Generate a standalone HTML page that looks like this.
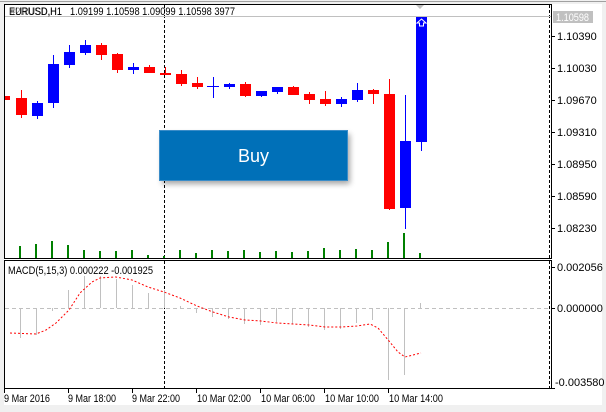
<!DOCTYPE html>
<html><head><meta charset="utf-8"><style>
html,body{margin:0;padding:0;background:#f0f0f0;}
svg{display:block;font-family:"Liberation Sans",sans-serif;}
</style></head><body>
<svg width="606" height="412" viewBox="0 0 606 412" xmlns="http://www.w3.org/2000/svg">
<rect x="0" y="0" width="606" height="412" fill="#f0f0f0"/>
<rect x="4" y="4" width="598" height="401" fill="#fff"/>
<line x1="0" y1="1.5" x2="606" y2="1.5" stroke="#a0a0a0"/>
<rect x="4.5" y="4.5" width="547" height="254" fill="none" stroke="#000"/>
<rect x="4.5" y="260.5" width="547" height="128" fill="none" stroke="#000"/>
<line x1="549.5" y1="5" x2="549.5" y2="258" stroke="#000" stroke-dasharray="3,2"/>
<line x1="549.5" y1="261" x2="549.5" y2="388" stroke="#000" stroke-dasharray="3,2"/>
<line x1="164.5" y1="5" x2="164.5" y2="258" stroke="#000" stroke-dasharray="3,2"/>
<line x1="164.5" y1="261" x2="164.5" y2="388" stroke="#000" stroke-dasharray="3,2"/>
<line x1="5" y1="16.5" x2="551" y2="16.5" stroke="#c0c0c0"/>
<polygon points="416,5 424,5 420,9" fill="#c0c0c0"/>
<rect x="553" y="11" width="40" height="12" fill="#c0c0c0"/>
<text x="556" y="21" font-size="11" fill="#fff" textLength="33" lengthAdjust="spacingAndGlyphs">1.10598</text>
<text x="9" y="15" font-size="11" fill="#000" textLength="53" lengthAdjust="spacingAndGlyphs">EURUSD,H1</text>
<text x="10" y="15" font-size="11" fill="#000" opacity="0.5" textLength="52" lengthAdjust="spacingAndGlyphs">#2RUSD,H1</text>
<text x="70" y="15" font-size="11" fill="#000" textLength="165" lengthAdjust="spacingAndGlyphs">1.09199 1.10598 1.09099 1.10598  3977</text>
<g font-size="11" fill="#000">
<g stroke="#000"><line x1="551" y1="36.5" x2="555" y2="36.5"/><line x1="551" y1="68.5" x2="555" y2="68.5"/><line x1="551" y1="100.5" x2="555" y2="100.5"/><line x1="551" y1="132.5" x2="555" y2="132.5"/><line x1="551" y1="164.5" x2="555" y2="164.5"/><line x1="551" y1="196.5" x2="555" y2="196.5"/><line x1="551" y1="228.5" x2="555" y2="228.5"/>
<line x1="551" y1="267.5" x2="555" y2="267.5"/><line x1="551" y1="308.5" x2="555" y2="308.5"/><line x1="551" y1="388.5" x2="555" y2="388.5"/></g>
<text x="557" y="40">1.10390</text><text x="557" y="72">1.10030</text><text x="557" y="104">1.09670</text><text x="557" y="136">1.09310</text><text x="557" y="168">1.08950</text><text x="557" y="200">1.08590</text><text x="557" y="232">1.08230</text>
<text x="557" y="271">0.002056</text><text x="557" y="312">0.000000</text><text x="555" y="386">-0.003580</text>
</g>
<g stroke-width="1">
<rect x="5" y="96" width="5" height="4" fill="#f00"/>
<g stroke="#f00"><line x1="21.5" y1="90" x2="21.5" y2="118"/><line x1="101.5" y1="43" x2="101.5" y2="60"/><line x1="117.5" y1="53" x2="117.5" y2="73"/><line x1="149.5" y1="65" x2="149.5" y2="73"/><line x1="165.5" y1="67" x2="165.5" y2="75"/><line x1="181.5" y1="70" x2="181.5" y2="86"/><line x1="197.5" y1="77" x2="197.5" y2="89"/><line x1="245.5" y1="82" x2="245.5" y2="97"/><line x1="293.5" y1="86" x2="293.5" y2="95"/><line x1="309.5" y1="92" x2="309.5" y2="104"/><line x1="325.5" y1="91" x2="325.5" y2="106"/><line x1="373.5" y1="89" x2="373.5" y2="104"/><line x1="389.5" y1="79" x2="389.5" y2="210"/></g>
<g fill="#f00"><rect x="16" y="98" width="11" height="17"/><rect x="96" y="45" width="11" height="10"/><rect x="112" y="54" width="11" height="16"/><rect x="144" y="67" width="11" height="6"/><rect x="160" y="73" width="11" height="2"/><rect x="176" y="74" width="11" height="10"/><rect x="192" y="83" width="11" height="4"/><rect x="240" y="84" width="11" height="12"/><rect x="288" y="87" width="11" height="8"/><rect x="304" y="94" width="11" height="6"/><rect x="320" y="99" width="11" height="5"/><rect x="368" y="90" width="11" height="4"/><rect x="384" y="94" width="11" height="115"/></g>
<g stroke="#00f"><line x1="37.5" y1="101" x2="37.5" y2="119"/><line x1="53.5" y1="55" x2="53.5" y2="108"/><line x1="69.5" y1="45" x2="69.5" y2="68"/><line x1="85.5" y1="40" x2="85.5" y2="55"/><line x1="133.5" y1="63" x2="133.5" y2="74"/><line x1="213.5" y1="77" x2="213.5" y2="98"/><line x1="207" y1="86.5" x2="219" y2="86.5"/><line x1="229.5" y1="83" x2="229.5" y2="89"/><line x1="261.5" y1="91" x2="261.5" y2="97"/><line x1="277.5" y1="87" x2="277.5" y2="94"/><line x1="341.5" y1="97" x2="341.5" y2="107"/><line x1="357.5" y1="83" x2="357.5" y2="102"/><line x1="405.5" y1="95" x2="405.5" y2="229"/><line x1="421.5" y1="17" x2="421.5" y2="151"/></g>
<g fill="#00f"><rect x="32" y="103" width="11" height="13"/><rect x="48" y="64" width="11" height="39"/><rect x="64" y="52" width="11" height="13"/><rect x="80" y="45" width="11" height="8"/><rect x="128" y="67" width="11" height="3"/><rect x="224" y="84" width="11" height="3"/><rect x="256" y="91" width="11" height="5"/><rect x="272" y="87" width="11" height="5"/><rect x="336" y="99" width="11" height="5"/><rect x="352" y="90" width="11" height="10"/><rect x="400" y="141" width="11" height="67"/><rect x="416" y="17" width="11" height="125"/></g>
<polygon points="421.5,19 426,23 423.5,23 423.5,26 419.5,26 419.5,23 417,23" fill="none" stroke="#fff"/>
</g>
<g fill="#008000">
<rect x="19" y="246" width="2" height="12"/><rect x="35" y="244" width="2" height="14"/><rect x="51" y="241" width="2" height="17"/><rect x="67" y="245" width="2" height="13"/><rect x="83" y="250" width="2" height="8"/><rect x="99" y="251" width="2" height="7"/><rect x="115" y="251" width="2" height="7"/><rect x="131" y="250" width="2" height="8"/><rect x="147" y="255" width="2" height="3"/><rect x="163" y="256" width="2" height="2"/><rect x="179" y="250" width="2" height="8"/><rect x="195" y="253" width="2" height="5"/><rect x="211" y="250" width="2" height="8"/><rect x="227" y="251" width="2" height="7"/><rect x="243" y="250" width="2" height="8"/><rect x="259" y="252" width="2" height="6"/><rect x="275" y="251" width="2" height="7"/><rect x="291" y="252" width="2" height="6"/><rect x="307" y="251" width="2" height="7"/><rect x="323" y="248" width="2" height="10"/><rect x="339" y="250" width="2" height="8"/><rect x="355" y="249" width="2" height="9"/><rect x="371" y="250" width="2" height="8"/><rect x="387" y="242" width="2" height="16"/><rect x="403" y="233" width="2" height="25"/><rect x="419" y="253" width="2" height="5"/>
</g>
<text x="8" y="274" font-size="11" fill="#000" textLength="145" lengthAdjust="spacingAndGlyphs">MACD(5,15,3) 0.000222 -0.001925</text>
<line x1="5" y1="308.5" x2="549" y2="308.5" stroke="#c0c0c0" stroke-dasharray="4,3"/>
<g stroke="#c0c0c0" stroke-width="1">
<line x1="20.5" y1="308" x2="20.5" y2="338"/><line x1="36.5" y1="308" x2="36.5" y2="335"/><line x1="52.5" y1="308" x2="52.5" y2="311"/><line x1="68.5" y1="308" x2="68.5" y2="290"/><line x1="84.5" y1="308" x2="84.5" y2="276"/><line x1="100.5" y1="308" x2="100.5" y2="276"/><line x1="116.5" y1="308" x2="116.5" y2="279"/><line x1="132.5" y1="308" x2="132.5" y2="285"/><line x1="148.5" y1="308" x2="148.5" y2="293"/><line x1="164.5" y1="308" x2="164.5" y2="290"/><line x1="180.5" y1="308" x2="180.5" y2="306"/><line x1="196.5" y1="308" x2="196.5" y2="313"/><line x1="212.5" y1="308" x2="212.5" y2="317"/><line x1="228.5" y1="308" x2="228.5" y2="319"/><line x1="244.5" y1="308" x2="244.5" y2="324"/><line x1="260.5" y1="308" x2="260.5" y2="325"/><line x1="276.5" y1="308" x2="276.5" y2="322"/><line x1="292.5" y1="308" x2="292.5" y2="324"/><line x1="308.5" y1="308" x2="308.5" y2="327"/><line x1="324.5" y1="308" x2="324.5" y2="330"/><line x1="340.5" y1="308" x2="340.5" y2="329"/><line x1="356.5" y1="308" x2="356.5" y2="323"/><line x1="372.5" y1="308" x2="372.5" y2="320"/><line x1="388.5" y1="308" x2="388.5" y2="380"/><line x1="404.5" y1="308" x2="404.5" y2="375"/><line x1="420.5" y1="308" x2="420.5" y2="303"/>
</g>
<polyline fill="none" stroke="#f00" stroke-dasharray="2,2" points="10,333 36,334 46,330 56,323 69,310 80,293 92,282 100,278 116,277 132,280 148,287 164,292 180,298 197,306 213,312 229,317 245,320 261,321 277,323 293,324 309,325 325,327 341,327 357,326 370,324 378,328 389,341 398,352 405,357 421,353"/>
<g stroke="#000"><line x1="4.5" y1="389" x2="4.5" y2="393"/><line x1="68.5" y1="389" x2="68.5" y2="393"/><line x1="132.5" y1="389" x2="132.5" y2="393"/><line x1="196.5" y1="389" x2="196.5" y2="393"/><line x1="260.5" y1="389" x2="260.5" y2="393"/><line x1="324.5" y1="389" x2="324.5" y2="393"/><line x1="388.5" y1="389" x2="388.5" y2="393"/></g>
<g font-size="11" fill="#000" lengthAdjust="spacingAndGlyphs"><text x="4" y="402" textLength="46" lengthAdjust="spacingAndGlyphs">9 Mar 2016</text><text x="68" y="402" textLength="48" lengthAdjust="spacingAndGlyphs">9 Mar 18:00</text><text x="132" y="402" textLength="48" lengthAdjust="spacingAndGlyphs">9 Mar 22:00</text><text x="197" y="402" textLength="54" lengthAdjust="spacingAndGlyphs">10 Mar 02:00</text><text x="261" y="402" textLength="54" lengthAdjust="spacingAndGlyphs">10 Mar 06:00</text><text x="325" y="402" textLength="54" lengthAdjust="spacingAndGlyphs">10 Mar 10:00</text><text x="389" y="402" textLength="54" lengthAdjust="spacingAndGlyphs">10 Mar 14:00</text></g>
<defs><filter id="sh" x="-10%" y="-30%" width="125%" height="170%"><feGaussianBlur stdDeviation="3"/></filter></defs>
<rect x="162" y="134" width="188" height="50" fill="#000" opacity="0.35" filter="url(#sh)"/>
<rect x="159.5" y="130.5" width="188" height="50" fill="#0070b8" stroke="#3a8cc8"/>
<text x="253.5" y="162" font-size="18" fill="#fff" text-anchor="middle">Buy</text>
</svg>
</body></html>
